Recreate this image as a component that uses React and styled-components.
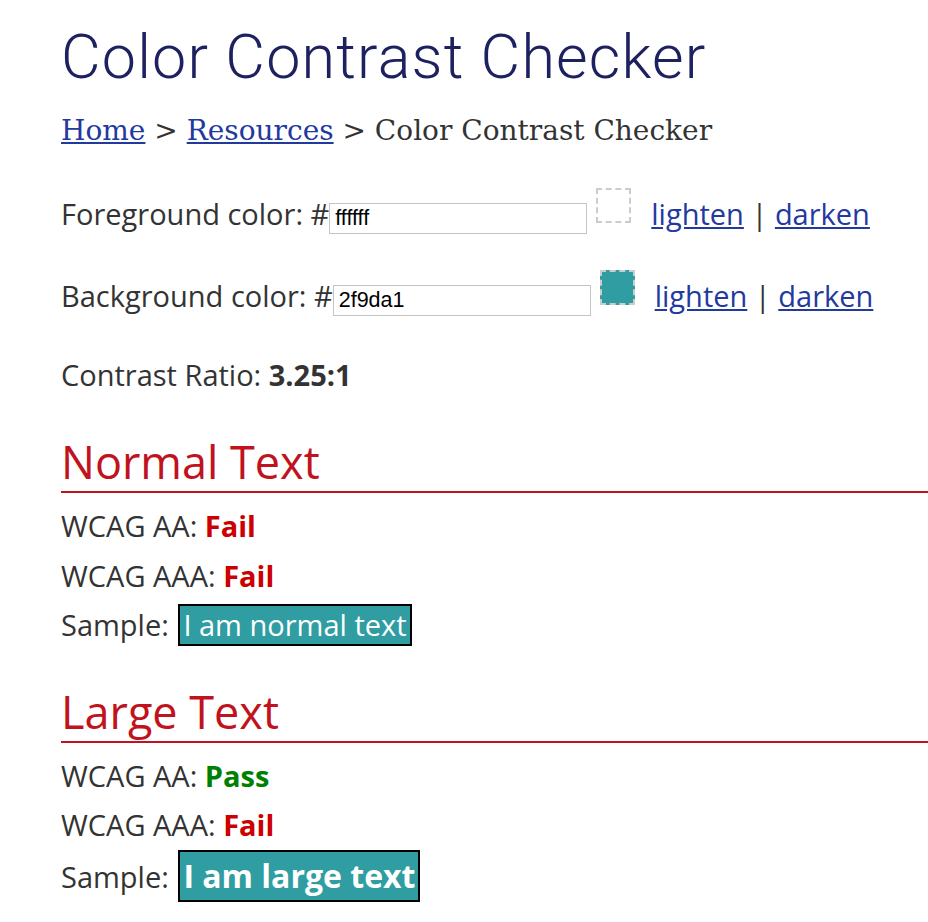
import React from 'react'
import styled, { createGlobalStyle } from 'styled-components'

// ---------------------------------------- Global ----------------------------------------

const GlobalStyle = createGlobalStyle`
    body{
        margin:0;
        background:#fff;
        font-family:'Open Sans', 'Noto Sans', sans-serif;
        color:#333;
    }
`

// ---------------------------------------- Styled ----------------------------------------

const Page = styled.div`
    padding:21px 0 0 61px;
`
const Title = styled.h1`
    font-family:Roboto, 'Liberation Sans', sans-serif;
    font-weight:300;
    font-size:61px;
    line-height:72px;
    color:#1d2160;
    margin:0;
    letter-spacing:1.2px;
`
const Breadcrumb = styled.div`
    font-family:'DejaVu Serif', 'Liberation Serif', serif;
    font-size:28px;
    line-height:32px;
    color:#333;
    margin-top:22px;
    a{
        color:#22399e;
    }
`
const Row = styled.p`
    font-size:29px;
    line-height:36px;
    margin:${p => p.$top || 0}px 0 0 0;
`
const HexInput = styled.input`
    font-family:'Liberation Sans', Arial, sans-serif;
    font-size:21.5px;
    width:248px;
    height:29px;
    padding:0 3px 0 5px;
    border:1px solid #c4c4c4;
    color:#000;
    vertical-align:baseline;
    margin-left:${p => p.$shift || 0}px;
`
const Swatch = styled.span`
    display:inline-block;
    width:31px;
    height:31px;
    border:2px dashed #ccc;
    background:${p => p.$color};
    margin:0 ${p => p.$after}px 2px 9px;
`
const Link = styled.a`
    color:#22399e;
    text-decoration:underline;
`
const Ratio = styled.b`
    font-weight:700;
`
const Section = styled.h2`
    font-weight:400;
    font-size:45px;
    line-height:54px;
    color:#c0131e;
    margin:${p => p.$top}px 0 8px 0;
    padding-bottom:2px;
    border-bottom:2px solid #c0131e;
`
const Check = styled.div`
    font-size:29px;
    line-height:49.5px;
`
const Result = styled.b`
    color:${p => (p.$pass ? '#008000' : '#cc0000')};
`
const Sample = styled.span`
    display:inline-block;
    background:#2f9da1;
    color:#fff;
    border:2px solid #000;
    padding:0 3px;
    line-height:${p => (p.$large ? 48 : 38)}px;
    font-size:${p => (p.$large ? 32 : 29)}px;
    font-weight:${p => (p.$large ? 700 : 400)};
    margin-left:2px;
`

// --------------------------------------- Structure ---------------------------------------

const ColorRow = ({ label, value, color, top, shift, after }) => (
    <Row $top={top}>
        {label} color: #
        <HexInput $shift={shift} type="text" defaultValue={value} />
        <Swatch $color={color} $after={after} />
        <Link href="#">lighten</Link> | <Link href="#">darken</Link>
    </Row>
)

const Results = ({ title, aa, aaa, large, top }) => (
    <>
        <Section $top={top}>{title}</Section>
        <Check>WCAG AA: <Result $pass={aa}>{aa ? 'Pass' : 'Fail'}</Result></Check>
        <Check>WCAG AAA: <Result $pass={aaa}>{aaa ? 'Pass' : 'Fail'}</Result></Check>
        <Check>Sample: <Sample $large={large}>{large ? 'I am large text' : 'I am normal text'}</Sample></Check>
    </>
)

export default function App() {
    return (
        <Page>
            <GlobalStyle />
            <Title>Color Contrast Checker</Title>
            <Breadcrumb>
                <a href="#">Home</a> &gt; <a href="#">Resources</a> &gt; Color Contrast Checker
            </Breadcrumb>
            <ColorRow label="Foreground" value="ffffff" color="transparent" top={41} shift={0} after={20} />
            <ColorRow label="Background" value="2f9da1" color="#2f9da1" top={36} shift={0} after={20} />
            <Row $top={41}>Contrast Ratio: <Ratio>3.25:1</Ratio></Row>
            <Results title="Normal Text" aa={false} aaa={false} top={42} />
            <Results title="Large Text" aa={true} aaa={false} large top={35} />
        </Page>
    )
}
